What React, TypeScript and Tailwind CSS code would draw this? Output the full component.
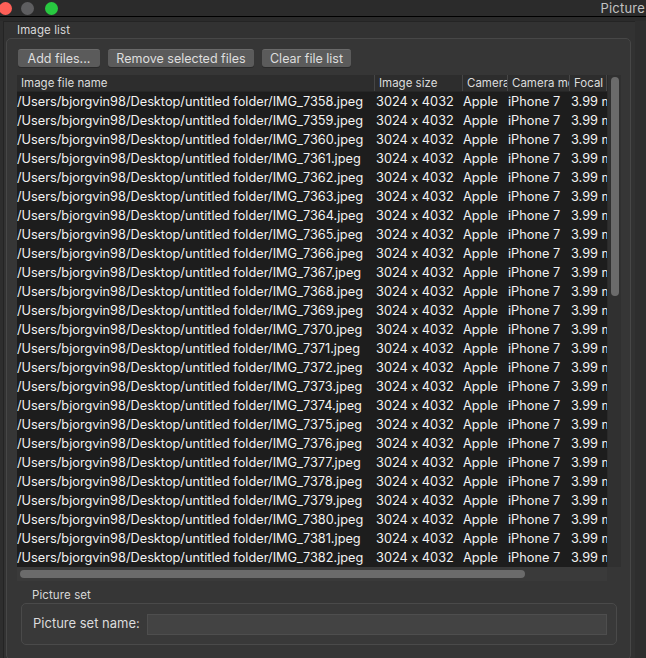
import React from "react";

const cols = "grid grid-cols-[358px_88px_45px_62px_37px]";

const rows = Array.from({ length: 25 }, (_, i) => ({
  file: `/Users/bjorgvin98/Desktop/untitled folder/IMG_${7358 + i}.jpeg`,
  size: "3024 x 4032",
  make: "Apple",
  model: "iPhone 7",
  focal: "3.99 mm",
}));

const headers = ["Image file name", "Image size", "Camera", "Camera model", "Focal"];

const Button = ({ label, w }: { label: string; w: string }) => (
  <button
    className={`${w} h-[18px] rounded-[3px] bg-[#5b5b5b] text-[12.5px] leading-[17px] text-[#dedede] border-t border-[#6a6a6a] shadow-[0_1px_0_#2a2a2a]`}
  >
    {label}
  </button>
);

export default function App() {
  return (
    <div className="w-[646px] h-[658px] overflow-hidden bg-[#2d2d2d] flex flex-col font-['Inter','Liberation_Sans',sans-serif] [font-feature-settings:'calt'_0] text-[#e8e8e8]">
      {/* title bar */}
      <div className="h-[17px] shrink-0 bg-[#2b2b2b] border-b border-black flex items-center relative">
        <div className="flex items-center gap-[8px]">
          <span className="w-[13px] h-[13px] rounded-full bg-[#fe5f57] -ml-[1px]" />
          <span className="w-[13px] h-[13px] rounded-full bg-[#5e5e60] ml-[1px]" />
          <span className="w-[13px] h-[13px] rounded-full bg-[#28c840] ml-[3px]" />
        </div>
        <span className="ml-auto text-[13px] leading-none text-[#c2c2c2] pr-[1px] tracking-[0.2px]">Picture</span>
      </div>
      <div className="h-[4px] shrink-0 bg-[#2b2b2b]" />

      {/* content frame */}
      <div className="flex-1 flex min-h-0">
        <div className="w-[3px] shrink-0 bg-[#2e2e2e]" />
        <div className="w-[632px] shrink-0 bg-[#323232] border-t border-l border-[#242424] pl-[2px] pt-[2px] flex flex-col">
          <div className="text-[11.5px] leading-[12px] text-[#d8d8d8] pl-[11px] tracking-[0.1px]">Image list</div>
          <div className="mt-[2px] w-[625px] h-[622px] shrink-0 rounded-[5px] border border-[#474747] bg-[#363636] flex flex-col pl-[10px] pr-[9px] pt-[10px]">
            <div className="flex gap-[8px] pl-[1px]">
              <Button label="Add files..." w="w-[82px]" />
              <Button label="Remove selected files" w="w-[146px]" />
              <Button label="Clear file list" w="w-[89px]" />
            </div>

            {/* table */}
            <div className="mt-[8px] flex flex-col w-[604px]">
              <div className="flex">
                <div className="w-[590px] flex flex-col">
                  <div className={`${cols} h-[17px] bg-[#2d2d2d] border-b border-[#262626]`}>
                    {headers.map((h) => (
                      <div
                        key={h}
                        className="overflow-hidden whitespace-nowrap pl-[4px] text-[11.5px] leading-[16px] text-[#dcdcdc] border-r border-[#464646]"
                      >
                        {h}
                      </div>
                    ))}
                  </div>
                  <div className="bg-[#1d1d1d]">
                    {rows.map((r) => (
                      <div key={r.file} className={`${cols} h-[19px] text-[12.75px] leading-[19px] text-[#f2f2f2]`}>
                        <div className="overflow-hidden whitespace-nowrap">{r.file}</div>
                        <div className="overflow-hidden whitespace-nowrap pl-[1px]">{r.size}</div>
                        <div className="overflow-hidden whitespace-nowrap">{r.make}</div>
                        <div className="overflow-hidden whitespace-nowrap">{r.model}</div>
                        <div className="overflow-hidden whitespace-nowrap pl-[1px]">{r.focal}</div>
                      </div>
                    ))}
                  </div>
                </div>
                {/* vertical scrollbar */}
                <div className="w-[14px] bg-[#303030] border-l border-[#2a2a2a] pt-[2px] flex justify-center">
                  <div className="w-[8px] h-[219px] rounded-full bg-[#6b6b6b]" />
                </div>
              </div>
              {/* horizontal scrollbar */}
              <div className="flex h-[14px]">
                <div className="w-[590px] bg-[#3a3a3a] pl-[3px] flex items-center">
                  <div className="w-[505px] h-[8px] rounded-full bg-[#6b6b6b]" />
                </div>
              </div>
            </div>

            {/* picture set */}
            <div className="mt-[8px] pl-[15px] text-[11.5px] leading-[12px] text-[#d8d8d8] tracking-[0.1px]">Picture set</div>
            <div className="mt-[2px] mx-[4px] h-[42px] rounded-[5px] border border-[#4a4a4a] bg-[#393939] flex items-center pl-[11px] pr-[9px]">
              <span className="text-[13px] text-[#dcdcdc] w-[114px] shrink-0">Picture set name:</span>
              <div className="flex-1 h-[21px] bg-[#434343] border border-[#4e4e4e]" />
            </div>
          </div>
        </div>
        <div className="flex-1 bg-[#2e2e2e]" />
      </div>
    </div>
  );
}
